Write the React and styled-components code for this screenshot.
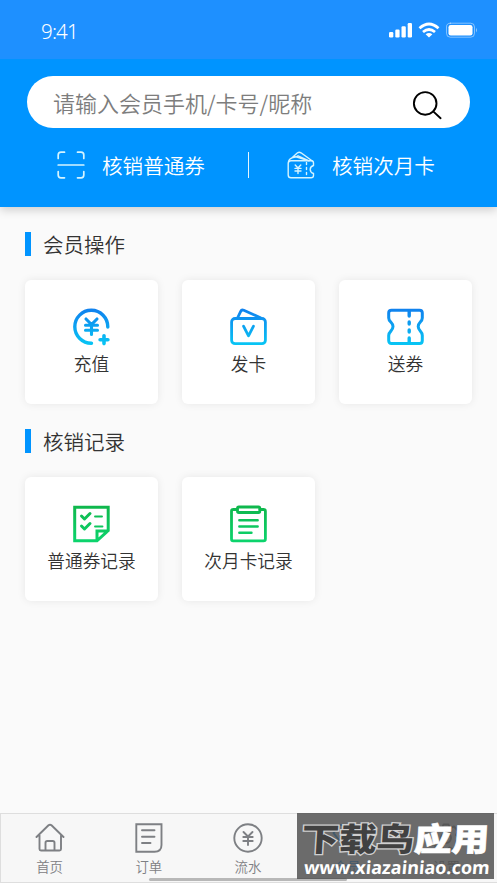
import React from "react";
import styled, { createGlobalStyle } from "styled-components";

const GlobalStyle = createGlobalStyle`
  * { box-sizing: border-box; }
  body {
    margin: 0;
    background: #fafafa;
    font-family: "Noto Sans CJK SC", "Noto Sans", sans-serif;
    color: #333;
  }
`;

const Screen = styled.div`
  position: relative;
  display: flex;
  flex-direction: column;
  width: 497px;
  height: 883px;
  overflow: hidden;
  background: #fafafa;
`;

const StatusBar = styled.div`
  position: relative;
  z-index: 1;
  display: flex;
  align-items: center;
  justify-content: space-between;
  height: 59px;
  flex: none;
  padding: 2px 19px 0 41px;
  background: #1e90ff;
  color: #fff;
`;

const Clock = styled.span`
  font: 350 20.5px/28px "Noto Sans", sans-serif;
  letter-spacing: -0.8px;
`;

const Header = styled.header`
  height: 148px;
  flex: none;
  padding: 17px 27px 0;
  background: #0094ff;
  box-shadow: 0 3px 9px rgba(0, 0, 0, 0.18);
`;

const SearchBox = styled.div`
  display: flex;
  align-items: center;
  justify-content: space-between;
  height: 52px;
  padding: 0 27px 0 26px;
  border-radius: 26px;
  background: #fff;
  color: #7d7d7d;
  font-size: 22px;
  line-height: 32px;
  font-weight: 350;
  white-space: nowrap;
`;

const Actions = styled.div`
  display: grid;
  grid-template-columns: 1fr 1px 1fr;
  align-items: center;
  height: 73px;
`;

const Action = styled.div`
  display: flex;
  align-items: center;
  gap: ${(p) => p.$gap}px;
  padding-left: ${(p) => p.$inset}px;
  color: #fff;
  font-size: 20.6px;
  line-height: 30px;
  font-weight: 350;
  white-space: nowrap;
`;

const Divider = styled.span`
  width: 1px;
  height: 26px;
  background: #e5f6ff;
`;

const Section = styled.section`
  padding: 0 25px;
  margin-top: ${(p) => p.$top}px;
`;

const SectionTitle = styled.h2`
  display: flex;
  align-items: center;
  gap: 12px;
  height: 30px;
  margin: 0 0 21px;
  font-size: 20.5px;
  font-weight: 350;
  line-height: 30px;
  &::before {
    content: "";
    width: 6px;
    height: 24px;
    background: #0094ff;
  }
`;

const Cards = styled.div`
  display: grid;
  grid-template-columns: repeat(3, 133px);
  gap: 24px;
`;

const Card = styled.div`
  display: flex;
  flex-direction: column;
  align-items: center;
  height: 124px;
  padding-top: 28px;
  border-radius: 6px;
  background: #fff;
  box-shadow: 0 0 8px rgba(0, 0, 0, 0.08);
  font-size: 17.7px;
  line-height: 26px;
  font-weight: 350;
  white-space: nowrap;
  svg { margin-bottom: 4px; }
`;

const TabBar = styled.nav`
  display: grid;
  grid-template-columns: repeat(5, 1fr);
  height: 70px;
  margin-top: auto;
  border: 1px solid #dedede;
  border-right: 0;
  background: #f7f7f7;
`;

const Tab = styled.div`
  display: flex;
  flex-direction: column;
  align-items: center;
  padding: 9px 2px 0 0;
  color: ${(p) => (p.$active ? "#0094ff" : "#7e8084")};
  font-size: 13.4px;
  line-height: 20px;
  font-weight: 350;
  svg { margin-bottom: 3px; }
`;

const HomeIndicator = styled.div`
  position: absolute;
  left: 149px;
  bottom: 2px;
  width: 198px;
  height: 3px;
  border-radius: 2px;
  background: #b8b8b8;
`;

const Watermark = styled.div`
  position: absolute;
  left: 297px;
  bottom: 4px;
  width: 197px;
  height: 66px;
  background: rgba(78, 78, 78, 0.83);
  color: #fff;
  white-space: nowrap;
`;

const BrandName = styled.div`
  display: flex;
  height: 43px;
  padding-left: 5px;
  font-size: 37.5px;
  line-height: 50px;
  font-weight: 900;
  transform: scaleY(0.86) skewX(-3deg);
`;

const BrandDark = styled.span`
  color: #414141;
  -webkit-text-stroke: 3px #cfcfcf;
  paint-order: stroke fill;
`;

const BrandLight = styled.span`
  -webkit-text-stroke: 0.8px #fff;
`;

const BrandUrl = styled.div`
  padding-left: 7px;
  font: 700 18px/22px "Open Sans", sans-serif;
  transform: translateY(0) skewX(-5deg);
`;

const stroke = { fill: "none", strokeLinecap: "round", strokeLinejoin: "round" };

const Signals = () => (
  <svg width="89" height="18" viewBox="0 0 89 18" {...stroke}>
    <g fill="#fff">
      <rect x="0" y="10" width="4.3" height="5.5" rx="1.2" />
      <rect x="6.3" y="7.5" width="4.3" height="8" rx="1.2" />
      <rect x="12.5" y="4.2" width="4.3" height="11.3" rx="1.2" />
      <rect x="18.7" y="1" width="4.3" height="14.5" rx="1.2" />
    </g>
    <g stroke="#fff" strokeWidth="2.8" strokeLinecap="butt">
      <path d="M30.5 6.2Q40 -2.2 49.5 6.2" />
      <path d="M34 10Q40 5 46 10" />
    </g>
    <path d="M36.6 12.2Q40 9.6 43.4 12.2L40 15.6Z" fill="#fff" />
    <rect x="57.5" y="1.2" width="28" height="14" rx="3.8" stroke="#fff" strokeOpacity=".45" />
    <rect x="59.5" y="3" width="24" height="10.4" rx="2.2" fill="#fff" />
    <path d="M87 5.8Q89 8.2 87 10.6Z" fill="#fff" opacity=".5" />
  </svg>
);

const SearchIcon = () => (
  <svg width="32" height="36" viewBox="0 0 32 36" {...stroke} stroke="#000" strokeWidth="1.9">
    <circle cx="14.2" cy="19.4" r="11.3" />
    <path d="M22.2 27.4L29.6 34.2" />
  </svg>
);

const ScanIcon = () => (
  <svg width="28" height="28" viewBox="0 0 28 28" {...stroke} stroke="#d5f4ff" strokeWidth="1.7">
    <path d="M1.2 7.5V4Q1.2 1.2 4 1.2H7.5M20.5 1.2H24Q26.8 1.2 26.8 4V7.5M26.8 20.5V24Q26.8 26.8 24 26.8H20.5M7.5 26.8H4Q1.2 26.8 1.2 24V20.5M1.2 14H26.8" />
  </svg>
);

const VoucherIcon = () => (
  <svg width="28" height="28" viewBox="0 0 28 28" {...stroke} stroke="#d5f4ff" strokeWidth="1.4">
    <path d="M25 9.8H4Q1.2 9.8 1.2 12.5V24Q1.2 26.8 4 26.8H24Q26.5 26.8 26.5 24.5V22.5Q23.2 21.2 23.2 18.4Q23.2 15.6 26.5 14.5V12Q26.5 9.8 24.5 9.8" />
    <path d="M1.5 11Q2 7.8 5 6.8L9 5.8L22 9.8M5 6.8L10.5 1.8Q12.2.7 14 1.8L25 9.8M9 5.8L11 4.8L21 9.5" />
    <path d="M8.2 14L11 17L13.8 14M11 17V22.5M8 17.4H14M8 20H14" />
    <path d="M19.5 11.5V25.5" strokeDasharray="2 3" />
  </svg>
);

const BlueGradient = ({ id }) => (
  <linearGradient id={id} gradientUnits="userSpaceOnUse" x1="18" y1="0" x2="18" y2="37">
    <stop stopColor="#107fee" />
    <stop offset="1" stopColor="#08c6f4" />
  </linearGradient>
);

const GreenGradient = ({ id }) => (
  <linearGradient id={id} gradientUnits="userSpaceOnUse" x1="18" y1="0" x2="18" y2="37">
    <stop stopColor="#0fb64b" />
    <stop offset="1" stopColor="#0cd46d" />
  </linearGradient>
);

const RechargeIcon = () => (
  <svg width="37" height="38" viewBox="0 0 37 38" {...stroke} stroke="url(#recharge)" strokeWidth="3.4">
    <BlueGradient id="recharge" />
    <path d="M34.8 19A16.5 16.5 0 1 0 18.5 35.3" />
    <path d="M13 11L18.5 16.5L24 11M18.5 16.5V26.5M12.5 17.2H24.5M12.5 22.2H24.5" strokeWidth="3.1" />
    <path d="M31 27.8V35.6M27.1 31.7H34.9" strokeWidth="3.6" />
  </svg>
);

const IssueCardIcon = () => (
  <svg width="37" height="38" viewBox="0 0 37 38" {...stroke} stroke="url(#issue)" strokeWidth="2.8">
    <BlueGradient id="issue" />
    <rect x="1.6" y="10.5" width="33.8" height="25.2" rx="3.5" />
    <path d="M7.5 10L10.7 3.3Q11.6 1.4 13.8 2.3L30.5 9.7" />
    <path d="M13.5 18.2L18.5 27.8L23.5 18.2" />
  </svg>
);

const SendCouponIcon = () => (
  <svg width="37" height="38" viewBox="0 0 37 38" {...stroke} stroke="url(#send)" strokeWidth="3">
    <BlueGradient id="send" />
    <path d="M4.5 2.2H32.5Q35.3 2.2 35.3 5V10C35.3 14 31.2 14.2 31.2 18.6C31.2 23 35.3 23.2 35.3 27.5V32.5Q35.3 35.5 32.5 35.5H4.5Q1.7 35.5 1.7 32.5V27.5C1.7 23.2 6 23 6 18.6C6 14.2 1.7 14 1.7 10V5Q1.7 2.2 4.5 2.2Z" />
    <path d="M22.2 3V8M22.2 14V16M22.2 22V24M22.2 30V34.5" strokeWidth="3.4" />
  </svg>
);

const ChecklistIcon = () => (
  <svg width="37" height="38" viewBox="0 0 37 38" {...stroke} stroke="url(#check)" strokeWidth="3">
    <GreenGradient id="check" />
    <path d="M1.7 2.2H35.2V25.5L24 35.8H1.7ZM24 35V26H34.5" strokeLinejoin="miter" />
    <path d="M8.5 11L11.5 14L17 8.5M8.5 21L11.5 24L17 18.5" />
    <path d="M22 11.5H29M22 21.5H29.5" strokeWidth="1.9" />
  </svg>
);

const ClipboardIcon = () => (
  <svg width="37" height="38" viewBox="0 0 37 38" {...stroke} stroke="url(#clip)" strokeWidth="2.8">
    <GreenGradient id="clip" />
    <path d="M7 4.5H3.2Q1.5 4.5 1.5 6.2V34Q1.5 35.8 3.2 35.8H33.6Q35.4 35.8 35.4 34V6.2Q35.4 4.5 33.6 4.5H30" />
    <rect x="7.5" y="2" width="22.3" height="5.5" rx="1.3" strokeWidth="2.8" />
    <path d="M9.3 15.2H27.7M9.3 21.5H27.7M9.3 27.8H21.5" strokeWidth="2.4" />
  </svg>
);

const tabStroke = { ...stroke, width: 30, height: 30, viewBox: "0 0 30 30", stroke: "currentColor", strokeWidth: 1.9 };

const HomeIcon = () => (
  <svg {...tabStroke}>
    <path d="M1.5 14L13.5 2.3Q15 1 16.5 2.3L28.5 14M4.5 12V26Q4.5 27.5 6 27.5H24.5Q26 27.5 26 26V12M10.5 27V19.8Q10.5 18 12.3 18H17.7Q19.5 18 19.5 19.8V27" />
  </svg>
);

const OrderIcon = () => (
  <svg {...tabStroke}>
    <path d="M2.3 1.2H27.5V22Q27.5 28.7 20.5 28.7H2.3ZM8 7.3H20.5M8 13.8H20.5M8 20H16.5" strokeLinejoin="miter" />
  </svg>
);

const FlowIcon = () => (
  <svg {...tabStroke}>
    <circle cx="15" cy="15" r="13.7" />
    <path d="M10.5 9L15 13.5L19.5 9M15 13.5V22M10.3 14H19.7M10.3 18H19.7" />
  </svg>
);

const MemberIcon = () => (
  <svg {...tabStroke}>
    <path d="M8 2H22L28.5 10L15 27L1.5 10ZM9 11L15 19L21 11" />
  </svg>
);

const SettingsIcon = () => (
  <svg {...tabStroke}>
    <path d="M12.5 1.5H17.5L19 5L23 3.5L27 8L25 12L28.5 15L25 18L26.5 23L22 26L18.5 24.5L15 28.5L11.5 24.5L7 26L3.5 22L5 18L1.5 15L5 11.5L3.5 7L8 4L11 5Z" />
    <circle cx="15" cy="15" r="5" />
  </svg>
);

const operations = [
  ["充值", RechargeIcon],
  ["发卡", IssueCardIcon],
  ["送券", SendCouponIcon],
];

const records = [
  ["普通券记录", ChecklistIcon],
  ["次月卡记录", ClipboardIcon],
];

const tabs = [
  ["首页", HomeIcon],
  ["订单", OrderIcon],
  ["流水", FlowIcon],
  ["会员", MemberIcon],
  ["设置", SettingsIcon],
];

const CardSection = ({ title, items, top }) => (
  <Section $top={top}>
    <SectionTitle>{title}</SectionTitle>
    <Cards>
      {items.map(([label, Icon]) => (
        <Card key={label}>
          <Icon />
          {label}
        </Card>
      ))}
    </Cards>
  </Section>
);

export default function App() {
  return (
    <>
      <GlobalStyle />
      <Screen>
        <StatusBar>
          <Clock>9:41</Clock>
          <Signals />
        </StatusBar>
        <Header>
          <SearchBox>
            <span>请输入会员手机/卡号/昵称</span>
            <SearchIcon />
          </SearchBox>
          <Actions>
            <Action $inset={30} $gap={17}>
              <ScanIcon />
              核销普通券
            </Action>
            <Divider />
            <Action $inset={38} $gap={17}>
              <VoucherIcon />
              核销次月卡
            </Action>
          </Actions>
        </Header>
        <CardSection title="会员操作" items={operations} top={22} />
        <CardSection title="核销记录" items={records} top={22} />
        <TabBar>
          {tabs.map(([label, Icon]) => (
            <Tab key={label} $active={label === "会员"}>
              <Icon />
              {label}
            </Tab>
          ))}
        </TabBar>
        <HomeIndicator />
        <Watermark>
          <BrandName>
            <BrandDark>下载鸟</BrandDark>
            <BrandLight>应用</BrandLight>
          </BrandName>
          <BrandUrl>www.xiazainiao.com</BrandUrl>
        </Watermark>
      </Screen>
    </>
  );
}
